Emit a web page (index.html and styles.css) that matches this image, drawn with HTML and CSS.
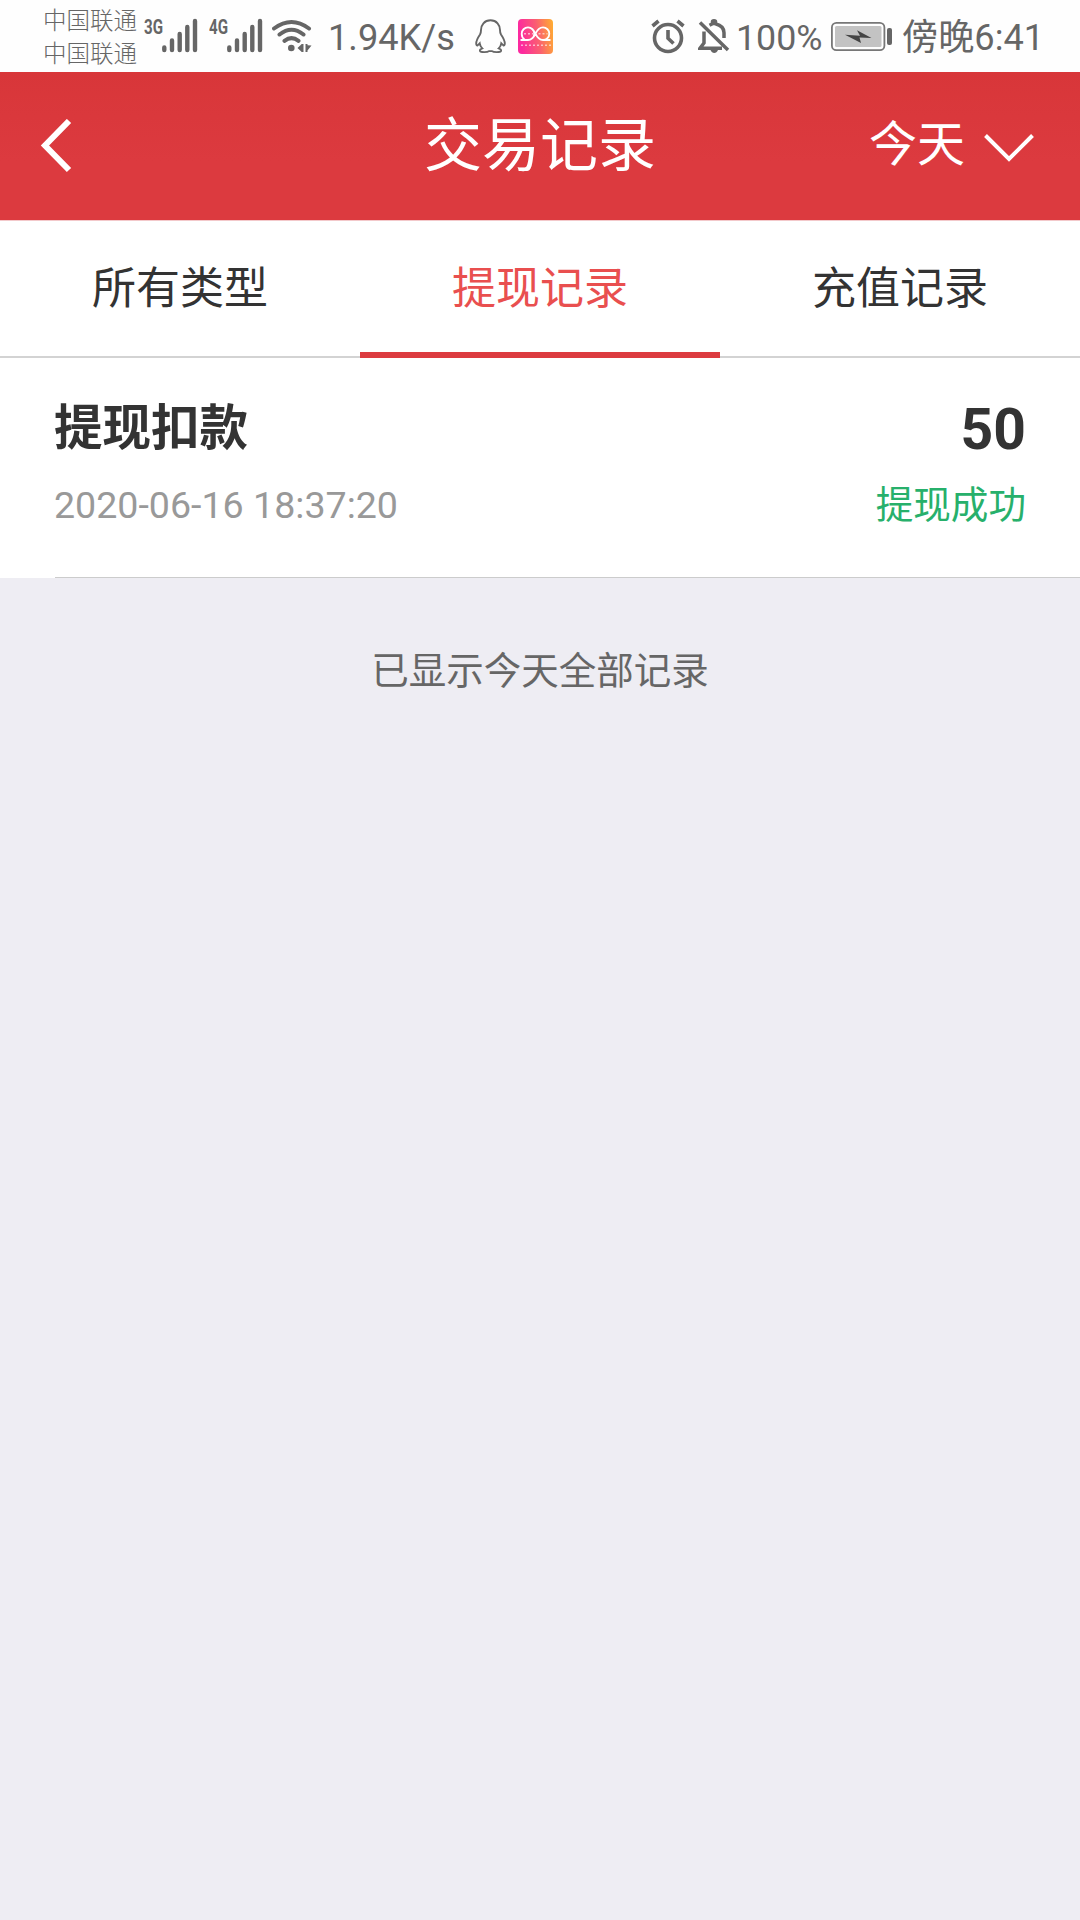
FILE: index.html
```html
<!DOCTYPE html>
<html lang="zh-CN">
<head>
<meta charset="utf-8">
<title>交易记录</title>
<link rel="stylesheet" href="styles.css">
</head>
<body>
<div class="status-bar">
  <div class="carriers"><span>中国联通</span><span>中国联通</span></div>
  <svg class="signal" width="56" height="72" viewBox="0 0 56 72">
    <text class="net" x="0" y="34" textLength="19" lengthAdjust="spacingAndGlyphs">3G</text>
    <path class="bars" d="M20.3 47.500v2.500M28 40.500v9.500M35.700 34v16M43.300 27v23M51 21v29"/>
  </svg>
  <svg class="signal signal-second" width="56" height="72" viewBox="0 0 56 72">
    <text class="net" x="0" y="34" textLength="19" lengthAdjust="spacingAndGlyphs">4G</text>
    <path class="bars" d="M20.3 47.500v2.500M28 40.500v9.500M35.700 34v16M43.300 27v23M51 21v29"/>
  </svg>
  <svg class="wifi" width="40" height="72" viewBox="0 0 40 72">
    <path class="waves" d="M2 28.500Q19.500 15.500 37 28.500M7.500 34.500Q19.500 25 31.500 34.500M12.500 40.800Q19.500 35.500 26.500 40.800"/>
    <circle cx="19.300" cy="48" r="3.300"/>
    <path d="M25.500 48l4-3.800V44h2v8h-2v-.2zM33.500 44h2v1.200l4 .3-4 5V52h-2z"/>
  </svg>
  <span class="speed">1.94K/s</span>
  <svg class="penguin" width="31" height="72" viewBox="0 0 31 72">
    <path d="M15.500 20.300C9.300 20.300 6 25 6 30c0 2-.2 3.200-1 4.500C3 37.500 1.200 40 1.200 43.500c0 1.500.7 2.200 1.500 1.800l2-2c.3 2.200 1.300 3.700 2.600 5-2 .8-2.800 1.700-2.300 2.700.8 1.500 7.500 1.500 9 .1h3c1.500 1.400 8.200 1.400 9-.1.500-1-.3-1.900-2.300-2.700 1.300-1.300 2.300-2.800 2.600-5l2 2c.8.400 1.500-.3 1.500-1.800 0-3.500-1.800-6-3.800-9-.8-1.300-1-2.500-1-4.500 0-5-3.300-9.700-9.500-9.700z"/>
  </svg>
  <svg class="app" width="35" height="35" viewBox="0 0 35 35">
    <defs><linearGradient id="glow" x1="0" y1=".15" x2="1" y2="0"><stop offset="0" stop-color="#fc299f"/><stop offset=".5" stop-color="#fa5e72"/><stop offset="1" stop-color="#ffb02e"/></linearGradient></defs>
    <rect width="35" height="35" rx="4" fill="url(#glow)"/>
    <path class="rings" d="M2.500 21H10a6.300 6.300 0 1 0-6.300-6.300c0 2.500 1 4.500 2.800 5.500M10 21c4.500 0 6-3 7.500-6.300S21 8.400 25 8.400a6.300 6.300 0 1 1 0 12.600c-4.500 0-6-3-7.500-6.300S14 8.400 10 8.400M25 21h7.500"/>
    <path class="dots" d="M6 14.700h9M20.500 14.700h9M3 26.300h30"/>
  </svg>
  <svg class="alarm" width="34" height="72" viewBox="0 0 34 72">
    <circle cx="17" cy="38" r="13.500"/>
    <path d="M17 30v8.300l5.500 5.200M1.500 26l6-5M32.500 26l-6-5"/>
  </svg>
  <svg class="bell" width="32" height="72" viewBox="0 0 32 72">
    <path class="line" d="M2 22.500l28 27.500M6 31.500V43l-4 5.200h22M11.500 25.200l3-1.500V21.500c0-1 3-1 3 0v2.200c5 1.300 8.500 4.300 8.500 9v5.300"/>
    <path d="M12.500 50h7.500c-1.500 4-6 4-7.500 0z"/>
  </svg>
  <span class="percent">100%</span>
  <svg class="battery" width="62" height="72" viewBox="0 0 62 72">
    <rect class="case" x=".9" y="22.900" width="52.500" height="27.300" rx="4.500"/>
    <rect class="charge" x="4" y="26" width="46.500" height="21" rx="1.500"/>
    <path class="bolt" d="M14 34.800l15 1-3-5.500L40.500 38l-12-.5L30 43z"/>
    <rect class="nub" x="56" y="28" width="5" height="17" rx="2"/>
  </svg>
  <span class="clock">傍晚6:41</span>
</div>

<header class="header">
  <svg class="back" width="32" height="54" viewBox="0 0 32 54"><path d="M29 2L5 26.500 29 51"/></svg>
  <h1 class="title">交易记录</h1>
  <div class="period">
    <span>今天</span>
    <svg width="50" height="30" viewBox="0 0 50 30"><path d="M1.500 2.500L25 26 48.500 2.500"/></svg>
  </div>
</header>

<nav class="tabs">
  <span class="tab">所有类型</span>
  <span class="tab active">提现记录</span>
  <span class="tab">充值记录</span>
</nav>

<main>
  <section class="record">
    <div class="row"><span class="name">提现扣款</span><span class="amount">50</span></div>
    <div class="row second"><span class="date">2020-06-16 18:37:20</span><span class="state">提现成功</span></div>
  </section>
  <p class="end">已显示今天全部记录</p>
</main>
</body>
</html>
```
FILE: styles.css
```css
* { box-sizing: border-box; }
body {
  margin: 0;
  min-height: 1920px;
  background: #eeedf3;
  color: #333;
  font-family: Roboto, "Noto Sans CJK SC", sans-serif;
}
svg { display: block; flex: none; }

.status-bar {
  display: flex;
  height: 72px;
  background: #fefefe;
  color: #666;
  fill: #666;
  line-height: 72px;
  white-space: nowrap;
}
.carriers {
  display: flex;
  flex-direction: column;
  width: 94px;
  margin: 5px 0 0 43px;
  font-size: 23.5px;
  font-weight: 300;
  line-height: 33px;
}
.signal { margin-left: 7px; }
.signal-second { margin-left: 9px; }
.net { font: 700 20px Roboto, sans-serif; }
.bars, .waves { fill: none; stroke: #666; stroke-width: 4.4; stroke-linecap: round; }
.waves { stroke-width: 4; }
.wifi { margin-left: 7px; }
.speed { width: 130px; margin: 2px 0 0 16px; font-size: 36.2px; }
.penguin { margin-left: 17px; fill: none; stroke: #666; stroke-width: 1.9; }
.app { margin: 19px 0 0 12px; }
.rings { fill: none; stroke: #fff; stroke-width: 1.8; }
.dots { fill: none; stroke: #fff; stroke-width: 1.5; stroke-dasharray: 2 2; opacity: .6; }
.alarm { margin-left: 98px; fill: none; stroke: #666; stroke-width: 3.6; }
.bell { margin-left: 13px; }
.line { fill: none; stroke: #666; stroke-width: 3.5; }
.percent { width: 86px; margin: 2px 0 0 6px; font-size: 35.8px; }
.battery { margin-left: 9px; }
.case { fill: none; stroke: #777; stroke-width: 1.8; }
.charge { fill: #c3c3c3; }
.bolt { fill: #444; }
.clock { margin: 2px 0 0 9px; font-size: 36.2px; }
.percent, .clock, .speed { line-height: 72px; height: 70px; }

.header {
  display: grid;
  grid-template-columns: 1fr auto 1fr;
  align-items: center;
  height: 149px;
  padding: 0 46px 0 40px;
  border-bottom: 1px solid #f3c9cb;
  background: linear-gradient(#d83639, #dc3a3f 60%);
  color: #fff;
}
.header svg { fill: none; stroke: #fff; }
.back { stroke-width: 6; }
.title { margin: 0 -6px 1px 0; font-size: 58px; font-weight: 400; line-height: 80px; }
.period { display: flex; justify-content: flex-end; gap: 19px; margin-bottom: 2px; font-size: 48px; line-height: 70px; }
.period svg { margin-top: 23px; stroke-width: 4; }

.tabs {
  display: grid;
  grid-template-columns: repeat(3, 1fr);
  height: 137px;
  background: #fff;
  font-size: 44px;
  line-height: 126px;
  text-align: center;
}
.tab { padding-top: 5px; border-bottom: 2px solid #d3d3d3; }
.tab.active { border-bottom: 6px solid #dc3b40; color: #e94f4f; }

.record {
  height: 220px;
  padding: 34px 54px 0 55px;
  background: linear-gradient(#ccc, #ccc) 55px 100% / 100% 1px no-repeat #fff;
}
.row { display: flex; align-items: flex-start; justify-content: space-between; height: 74px; line-height: 74px; }
.name { margin-left: -1px; font-size: 48.5px; font-weight: 700; }
.amount { margin-top: 1px; font-size: 57px; font-weight: 700; }
.second { height: 78px; font-size: 37.6px; line-height: 78px; }
.date { margin-left: -1px; color: #999; }
.state { color: #27b06b; }
.end { margin: 63px 0 0; color: #666; font-size: 37.5px; line-height: 60px; text-align: center; }
```
